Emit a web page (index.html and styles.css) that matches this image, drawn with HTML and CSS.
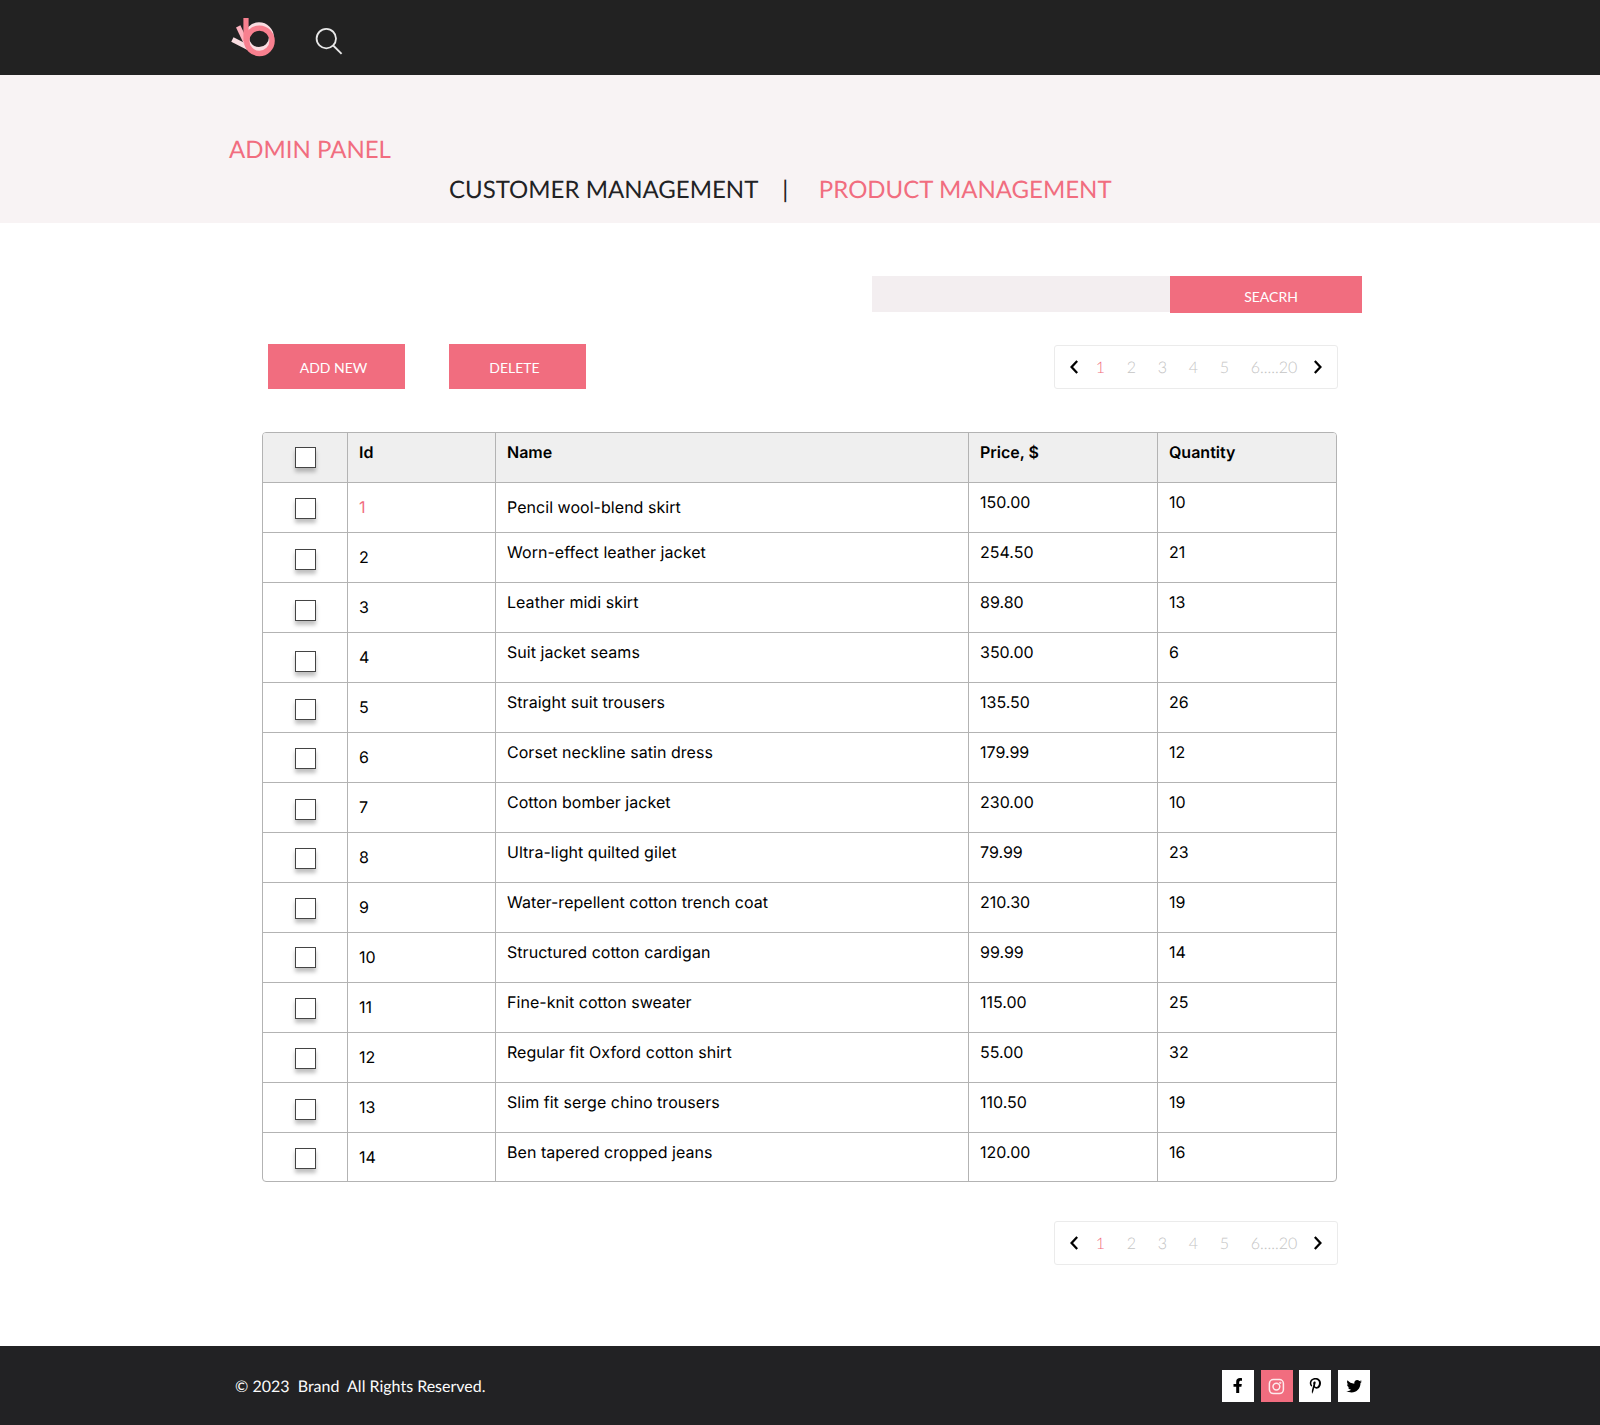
FILE: index.html
```html
<!DOCTYPE html>
<html lang="en">
<head>
<meta charset="utf-8">
<title>Admin panel</title>
<link rel="stylesheet" href="styles.css">
</head>
<body>
<header class="topbar">
  <svg class="logo" viewBox="0 0 46 42" width="46" height="42">
    <path d="M2.4 23.6 L19 32" stroke="#f9dde1" stroke-width="5"/>
    <path d="M8.2 10.4 L17.5 30" stroke="#fdb3bf" stroke-width="4.8"/>
    <circle cx="29" cy="21.2" r="12.4" fill="none" stroke="#f9dde1" stroke-width="5"/>
    <path d="M16 2 V25" stroke="#f8808f" stroke-width="5.2"/>
    <circle cx="29.4" cy="24.8" r="12.7" fill="none" stroke="#f8808f" stroke-width="5.4"/>
  </svg>
  <svg class="search-icon" viewBox="0 0 28 28" width="28" height="28" fill="none" stroke="#e8e8e8" stroke-width="1.8">
    <circle cx="11.3" cy="11.6" r="9.7"/><path d="M18.2 18.5 L26.6 26.9"/>
  </svg>
</header>
<section class="hero">
  <h1 class="hero-title">ADMIN PANEL</h1>
  <nav class="tabs"><a class="tab">CUSTOMER MANAGEMENT</a><span class="divider">|</span><a class="tab active">PRODUCT MANAGEMENT</a></nav>
</section>
<main class="content">
  <form class="search"><input class="search-input" type="text" aria-label="Search"><button class="search-button" type="button">SEACRH</button></form>
  <div class="toolbar">
    <button class="action" type="button">ADD NEW</button>
    <button class="action" type="button">DELETE</button>
    <nav class="pager">
      <svg class="arrow" viewBox="0 0 8 14" width="8" height="14"><path d="M7.2 1 L1.6 7 L7.2 13"/></svg>
      <a class="page current">1</a><a class="page">2</a><a class="page">3</a><a class="page">4</a><a class="page">5</a><a class="page last">6.....20</a>
      <svg class="arrow" viewBox="0 0 8 14" width="8" height="14"><path d="M.8 1 L6.4 7 L.8 13"/></svg>
    </nav>
  </div>
  <div class="table">
    <div class="row head"><div class="cell check"><input type="checkbox" class="box high"></div><div class="cell">Id</div><div class="cell">Name</div><div class="cell">Price, $</div><div class="cell">Quantity</div></div>
    <div class="row selected"><div class="cell check"><input type="checkbox" class="box"></div><div class="cell id">1</div><div class="cell name">Pencil wool-blend skirt</div><div class="cell">150.00</div><div class="cell">10</div></div>
    <div class="row"><div class="cell check"><input type="checkbox" class="box low"></div><div class="cell id">2</div><div class="cell name">Worn-effect leather jacket</div><div class="cell">254.50</div><div class="cell">21</div></div>
    <div class="row"><div class="cell check"><input type="checkbox" class="box lower"></div><div class="cell id">3</div><div class="cell name">Leather midi skirt</div><div class="cell">89.80</div><div class="cell">13</div></div>
    <div class="row"><div class="cell check"><input type="checkbox" class="box lowest"></div><div class="cell id">4</div><div class="cell name">Suit jacket seams</div><div class="cell">350.00</div><div class="cell">6</div></div>
    <div class="row"><div class="cell check"><input type="checkbox" class="box low"></div><div class="cell id">5</div><div class="cell name">Straight suit trousers</div><div class="cell">135.50</div><div class="cell">26</div></div>
    <div class="row"><div class="cell check"><input type="checkbox" class="box"></div><div class="cell id">6</div><div class="cell name">Corset neckline satin dress</div><div class="cell">179.99</div><div class="cell">12</div></div>
    <div class="row"><div class="cell check"><input type="checkbox" class="box low"></div><div class="cell id">7</div><div class="cell name">Cotton bomber jacket</div><div class="cell">230.00</div><div class="cell">10</div></div>
    <div class="row"><div class="cell check"><input type="checkbox" class="box"></div><div class="cell id">8</div><div class="cell name">Ultra-light quilted gilet</div><div class="cell">79.99</div><div class="cell">23</div></div>
    <div class="row"><div class="cell check"><input type="checkbox" class="box"></div><div class="cell id">9</div><div class="cell name">Water-repellent cotton trench coat</div><div class="cell">210.30</div><div class="cell">19</div></div>
    <div class="row"><div class="cell check"><input type="checkbox" class="box high"></div><div class="cell id">10</div><div class="cell name">Structured cotton cardigan</div><div class="cell">99.99</div><div class="cell">14</div></div>
    <div class="row"><div class="cell check"><input type="checkbox" class="box"></div><div class="cell id">11</div><div class="cell name">Fine-knit cotton sweater</div><div class="cell">115.00</div><div class="cell">25</div></div>
    <div class="row"><div class="cell check"><input type="checkbox" class="box"></div><div class="cell id">12</div><div class="cell name">Regular fit Oxford cotton shirt</div><div class="cell">55.00</div><div class="cell">32</div></div>
    <div class="row"><div class="cell check"><input type="checkbox" class="box low"></div><div class="cell id">13</div><div class="cell name">Slim fit serge chino trousers</div><div class="cell">110.50</div><div class="cell">19</div></div>
    <div class="row"><div class="cell check"><input type="checkbox" class="box"></div><div class="cell id">14</div><div class="cell name">Ben tapered cropped jeans</div><div class="cell">120.00</div><div class="cell">16</div></div>
  </div>
  <div class="bottom-pager">
    <nav class="pager">
      <svg class="arrow" viewBox="0 0 8 14" width="8" height="14"><path d="M7.2 1 L1.6 7 L7.2 13"/></svg>
      <a class="page current">1</a><a class="page">2</a><a class="page">3</a><a class="page">4</a><a class="page">5</a><a class="page last">6.....20</a>
      <svg class="arrow" viewBox="0 0 8 14" width="8" height="14"><path d="M.8 1 L6.4 7 L.8 13"/></svg>
    </nav>
  </div>
</main>
<footer class="footer">
  <p class="copyright">© 2023&nbsp; Brand&nbsp; All Rights Reserved.</p>
  <div class="socials">
    <a class="social"><svg viewBox="0 0 32 32" width="32" height="32"><path d="M17.2 23 V16.8 H19.4 L19.8 14.1 H17.2 V12.4 C17.2 11.5 17.7 10.8 18.9 10.8 H20 V8.3 C19.6 8.2 18.8 8.1 18 8.1 C15.7 8.1 14.2 9.4 14.2 11.8 V14.1 H11.5 V16.8 H14.2 V23 Z"/></svg></a>
    <a class="social pink"><svg viewBox="0 0 32 32" width="32" height="32" fill="none" stroke="#fdebed" stroke-width="1.5"><rect x="8.4" y="9.6" width="14" height="14" rx="4"/><circle cx="15.4" cy="16.6" r="3.4"/><circle cx="19.3" cy="12.8" r=".4"/></svg></a>
    <a class="social"><svg viewBox="0 0 32 32" width="32" height="32"><path d="M16.5 8 C12.8 8 10.8 10.4 10.8 13.2 C10.8 14.5 11.5 16.1 12.6 16.6 C12.9 16.7 12.9 16.5 13.2 15.4 C13.2 15.2 12.3 14.5 12.3 13 C12.3 11.1 13.8 9.4 16.3 9.4 C18.5 9.4 20 10.8 20 12.9 C20 15.2 18.8 16.9 17.3 16.9 C16.4 16.9 15.8 16.2 16 15.4 C16.2 14.4 16.7 13.3 16.7 12.6 C16.7 10.8 14.2 11.1 14.2 13.3 C14.2 14 14.4 14.5 14.4 14.5 L13 19.9 C12.7 21 13 23.2 13.1 23.8 C14.2 22.4 14.5 20.8 15.3 17.6 C15.7 18.3 16.6 18.7 17.5 18.7 C20.3 18.7 22 16 22 13 C22 10.1 19.7 8 16.5 8 Z"/></svg></a>
    <a class="social"><svg viewBox="0 0 32 32" width="32" height="32"><path d="M24 11.5 C23.4 11.8 22.8 11.9 22.1 12 C22.8 11.6 23.3 11 23.5 10.2 C22.9 10.6 22.2 10.9 21.4 11 C19.4 8.9 15.7 10.5 16.3 13.7 C13.5 13.6 11.1 12.2 9.5 10.3 C8.6 11.7 9 13.7 10.5 14.7 C10 14.7 9.5 14.6 9 14.3 C9 15.8 10.1 17.1 11.6 17.5 C11.1 17.6 10.6 17.6 10.1 17.5 C10.5 18.8 11.7 19.7 13.2 19.8 C11.8 20.9 10.1 21.3 8.4 21.1 C15.2 25 22.6 20.5 22.5 13.1 C23.1 12.7 23.6 12.1 24 11.5 Z"/></svg></a>
  </div>
</footer>
</body>
</html>
```
FILE: styles.css
```css
* { box-sizing: border-box; }
body { margin: 0; background: #fff; font-family: Lato, sans-serif; color: #222224; text-rendering: geometricPrecision; }
button, input { margin: 0; padding: 0; border: 0; border-radius: 0; font: inherit; }

.topbar { display: flex; align-items: flex-start; gap: 39px; height: 75px; padding: 16px 0 0 230px; background: #222; }
.search-icon { margin-top: 11px; }

.hero { height: 148px; padding-top: 59px; background: #f8f3f4; font-size: 24px; line-height: 32px; }
.hero-title { margin: 0 0 8px 229px; font-size: 24px; font-weight: 400; color: #f16d7f; }
.tabs { display: flex; padding-left: 449px; }
.divider { margin: 0 30.5px 0 24px; }
.active { color: #f16d7f; }

.content { height: 1123px; padding: 53px 0 0 262px; }
.search { display: flex; align-items: flex-start; margin-left: 610px; }
.search-input { width: 298px; height: 36px; background: #f3eef0; }
.search-button { width: 192px; height: 37px; padding: 3px 10px 0 20px; background: #f16d7f; color: #fff; font-size: 14px; }

.toolbar { display: flex; width: 1076px; padding: 31px 0 0 6px; gap: 44px; }
.action { width: 137px; height: 45px; padding: 1px 6px 0 0; background: #f16d7f; color: #fff; font-size: 14px; }

.pager { display: flex; align-items: center; width: 284px; height: 44px; margin: 1px 0 0 auto; padding: 0 15px; border: 1px solid #ebebeb; border-radius: 3px; font-size: 16px; font-weight: 300; color: #c4c4c4; }
.arrow { flex: none; fill: none; stroke: #000; stroke-width: 2.3; }
.page { flex: none; width: 31px; text-align: center; }
.page.last { width: 57.3px; margin-right: 16.5px; text-align: right; }
.page.current { margin-left: 7px; color: #f16d7f; }

.table { width: 1075px; height: 750px; margin-top: 43px; border: 1px solid #b3b3b3; border-radius: 4px; overflow: hidden; font: 16px/20px Inter, sans-serif; color: #000; }
.row { display: grid; grid-template-columns: 84px 148px 473px 189px 179px; height: 50px; border-top: 1px solid #b3b3b3; }
.row.head { height: 49px; border-top: 0; background: #efefef; font-weight: 600; }
.cell { padding: 9px 0 0 11px; border-left: 1px solid #b3b3b3; }
.cell.check { padding: 0 0 0 32px; border-left: 0; }
.cell.id, .selected .name { padding-top: 14px; }
.cell.name { letter-spacing: .04px; }
.selected .id { color: #f16d7f; }
.box { display: block; width: 21px; height: 21px; margin-top: 15px; appearance: none; border: 1px solid #444; background: #fff; box-shadow: 0 4px 4px rgba(0, 0, 0, .25); }
.box.high { margin-top: 14px; }
.box.low { margin-top: 16px; }
.box.lower { margin-top: 17px; }
.box.lowest { margin-top: 18px; }
.bottom-pager { width: 1076px; padding-top: 38px; }

.footer { display: flex; justify-content: space-between; height: 79px; padding: 24px 230px 0 235px; background: #222224; }
.copyright { margin: 0; padding-top: 5px; font-size: 16px; line-height: 24px; color: #fbfbfb; }
.socials { display: flex; gap: 6.67px; }
.social { width: 32px; height: 32px; background: #fff; }
.social svg { display: block; }
.social.pink { background: #f16d7f; }
```
